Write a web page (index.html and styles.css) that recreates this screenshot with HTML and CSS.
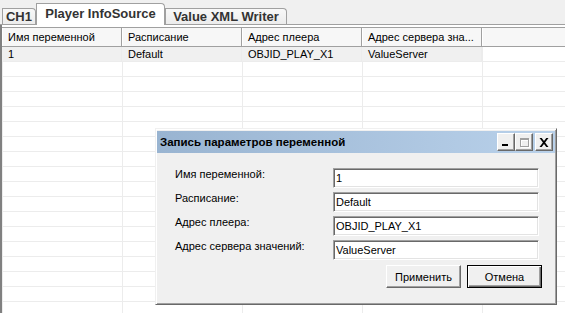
FILE: index.html
```html
<!DOCTYPE html>
<html lang="ru">
<head>
    <meta charset="UTF-8">
    <title>Player InfoSource</title>
    <link rel="stylesheet" href="styles.css">
</head>
<body>
    <div class="tabs">
        <div class="tab tab-ch1">CH1</div>
        <div class="tab active">Player InfoSource</div>
        <div class="tab tab-xml">Value XML Writer</div>
    </div>

    <div class="page">
        <div class="list">
            <div class="list-head">
                <div class="col">Имя переменной</div>
                <div class="col">Расписание</div>
                <div class="col">Адрес плеера</div>
                <div class="col">Адрес сервера зна...</div>
                <div class="col col-rest"></div>
            </div>
            <div class="list-body">
                <div class="row">
                    <div class="cell">1</div>
                    <div class="cell">Default</div>
                    <div class="cell">OBJID_PLAY_X1</div>
                    <div class="cell">ValueServer</div>
                </div>
            </div>
        </div>
    </div>

    <!-- окно редактирования поверх списка -->
    <div class="dialog">
        <div class="titlebar">
            <span class="title">Запись параметров переменной</span>
            <div class="tb">
                <svg width="10" height="10" viewBox="0 0 10 10"><rect x="1" y="7" width="6" height="2" fill="#000"/></svg>
            </div>
            <div class="tb">
                <svg width="11" height="11" viewBox="0 0 11 11">
                    <path d="M2 2h9v9h-9z M3 4h7v6h-7z" fill="#fff" fill-rule="evenodd"/>
                    <path d="M1 1h9v9h-9z M2 3h7v6h-7z" fill="#a0a0a0" fill-rule="evenodd"/>
                </svg>
            </div>
            <div class="tb tb-close">
                <svg width="10" height="9" viewBox="0 0 10 9"><path d="M0.5 0h2.2l2.3 2.9 2.3-2.9h2.2l-3.4 4.5 3.4 4.5h-2.2l-2.3-2.9-2.3 2.9h-2.2l3.4-4.5z" fill="#000"/></svg>
            </div>
        </div>

        <div class="form">
            <label class="label">Имя переменной:</label>
            <input class="field" type="text" value="1" readonly>

            <label class="label">Расписание:</label>
            <input class="field" type="text" value="Default" readonly>

            <label class="label">Адрес плеера:</label>
            <input class="field" type="text" value="OBJID_PLAY_X1" readonly>

            <label class="label">Адрес сервера значений:</label>
            <input class="field" type="text" value="ValueServer" readonly>

            <div class="actions">
                <button class="btn">Применить</button>
                <button class="btn btn-default">Отмена</button>
            </div>
        </div>
    </div>
</body>
</html>
```

FILE: styles.css
```css
body {
    margin: 0;
    width: 565px;
    height: 313px;
    overflow: hidden;
    position: relative;
    background: #fff;
    font-family: "Liberation Sans", Arial, sans-serif;
    font-size: 11px;
    color: #000;
}

/* вкладки */
.tabs {
    display: flex;
    align-items: flex-end;
    height: 24px;
    padding-left: 2px;
    background: #f0f0f0;
    border-bottom: 1px solid #a0a0a0;
}

.tab {
    box-sizing: border-box;
    height: 16px;
    border: 1px solid #a0a0a0;
    border-bottom: 0;
    border-top-right-radius: 4px;
    background: linear-gradient(#f8f8f8, #ececec);
    font-size: 13px;
    font-weight: bold;
    line-height: 15px;
    color: #333;
    text-align: center;
    white-space: nowrap;
}

.tab-ch1 {
    width: 34px;
}

.tab-xml {
    width: 122px;
}

.tab.active {
    width: 129px;
    height: 22px;
    margin-bottom: -1px;
    line-height: 20px;
    background: #fff;
}

/* список переменных */
.page {
    border-left: 2px solid #808080;
    padding-top: 2px;
}

.list {
    border-top: 1px solid #a0a0a0;
}

.list-head {
    display: flex;
    box-sizing: border-box;
    height: 19px;
    border-bottom: 1px solid #a0a0a0;
    background: #f7f7f7;
}

.col {
    box-sizing: border-box;
    width: 120px;
    padding-left: 5px;
    line-height: 18px;
    border-left: 1px solid #fff;
    border-right: 1px solid #a0a0a0;
    white-space: nowrap;
    overflow: hidden;
}

.col-rest {
    flex: 1;
    border-right: 0;
}

.list-body {
    height: 270px;
    background:
        linear-gradient(to right, #ececec 1px, transparent 1px) 120px 0 / 120px 100% repeat-x,
        linear-gradient(to bottom, transparent 14px, #ececec 14px) 0 0 / 100% 15px repeat-y;
}

.row {
    display: flex;
    height: 15px;
}

.cell {
    box-sizing: border-box;
    width: 120px;
    height: 14px;
    padding-left: 6px;
    line-height: 14px;
    background: #f0f0f0;
    border-right: 1px solid #ececec;
}

/* диалог */
.dialog {
    position: absolute;
    left: 155px;
    top: 128px;
    width: 402px;
    height: 177px;
    box-sizing: border-box;
    padding: 2px 1px 0 1px;
    background: #f0f0f0;
    border: 1px solid;
    border-color: #f0f0f0 #696969 #696969 #f0f0f0;
    box-shadow: inset 1px 1px #fff, inset -1px -1px #a0a0a0;
}

.titlebar {
    display: flex;
    align-items: center;
    height: 22px;
    padding: 0 2px 0 3px;
    background: linear-gradient(to right, #99b4d1, #b9d1ea);
}

.title {
    flex: 1;
    font-size: 11.5px;
    font-weight: bold;
}

.tb {
    box-sizing: border-box;
    width: 18px;
    height: 18px;
    display: flex;
    align-items: center;
    justify-content: center;
    background: #f0f0f0;
    border: 1px solid;
    border-color: #fff #696969 #696969 #fff;
    box-shadow: inset -1px -1px #a0a0a0;
}

.tb-close {
    margin-left: 2px;
}

.form {
    display: grid;
    grid-template-columns: 158px 206px;
    row-gap: 4px;
    padding: 15px 0 0 18px;
}

.label {
    line-height: 14px;
    margin-top: -1px;
    white-space: nowrap;
}

.field {
    box-sizing: border-box;
    width: 206px;
    height: 20px;
    margin: 0;
    padding: 0 2px;
    font-family: "Liberation Sans", Arial, sans-serif;
    font-size: 11px;
    color: #000;
    background: #fff;
    border: 1px solid;
    border-color: #a0a0a0 #fff #fff #a0a0a0;
    box-shadow: inset 1px 1px #696969, inset -1px -1px #e3e3e3;
    outline: none;
}

.actions {
    grid-column: 1 / -1;
    display: flex;
    justify-content: flex-end;
    gap: 6px;
    margin: 1px -3px 0 0;
}

.btn {
    box-sizing: border-box;
    width: 75px;
    height: 23px;
    margin: 0;
    padding: 0;
    font-family: "Liberation Sans", Arial, sans-serif;
    font-size: 11px;
    color: #000;
    background: #f0f0f0;
    border: 1px solid;
    border-color: #fff #696969 #696969 #fff;
    box-shadow: inset -1px -1px #a0a0a0;
}

.btn-default {
    border: 1px solid #000;
    box-shadow: inset 1px 1px #fff, inset -1px -1px #696969, inset -2px -2px #a0a0a0;
}
```
